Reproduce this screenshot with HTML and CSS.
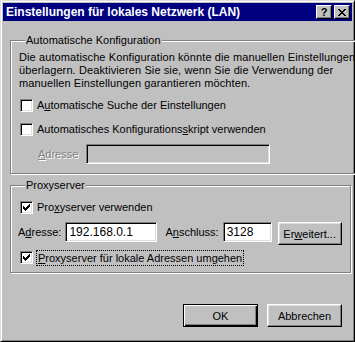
FILE: index.html
```html
<!DOCTYPE html>
<html lang="de">
<head>
    <meta charset="UTF-8">
    <title>Einstellungen für lokales Netzwerk (LAN)</title>
    <link rel="stylesheet" href="styles.css">
</head>
<body>
    <div class="window">
        <div class="titlebar">
            <span class="title">Einstellungen für lokales Netzwerk (LAN)</span>
            <div class="caption-buttons">
                <span class="caption-btn help">?</span>
                <span class="caption-btn close">
                    <svg width="8" height="7" viewBox="0 0 8 7" shape-rendering="crispEdges">
                        <path d="M0 0h2v1H0z M6 0h2v1H6z M1 1h2v1H1z M5 1h2v1H5z M2 2h4v1H2z M3 3h2v1H3z M2 4h4v1H2z M1 5h2v1H1z M5 5h2v1H5z M0 6h2v1H0z M6 6h2v1H6z" fill="#000"/>
                    </svg>
                </span>
            </div>
        </div>

        <div class="dialog">
            <fieldset class="group group-auto">
                <legend>Automatische Konfiguration</legend>
                <p class="info">Die automatische Konfiguration könnte die manuellen Einstellungen<br>überlagern. Deaktivieren Sie sie, wenn Sie die Verwendung der<br>manuellen Einstellungen garantieren möchten.</p>

                <div class="check check-first">
                    <span class="box"></span>
                    <span class="check-text">A<u>u</u>tomatische Suche der Einstellungen</span>
                </div>
                <div class="check check-second">
                    <span class="box"></span>
                    <span class="check-text">Automatisches Konfigurations<u>s</u>kript verwenden</span>
                </div>
                <div class="script-row">
                    <span class="disabled-label"><u>A</u>dresse</span>
                    <span class="field field-disabled"></span>
                </div>
            </fieldset>

            <fieldset class="group group-proxy">
                <legend>Proxyserver</legend>
                <div class="check check-proxy">
                    <span class="box checked">
                        <svg width="7" height="7" viewBox="0 0 7 7" shape-rendering="crispEdges">
                            <path d="M0 2h1v1h1v1h1V3h1V2h1V1h1V0h1v3h-1v1h-1v1h-1v1h-1v1H2V6H1V5H0z" fill="#000"/>
                        </svg>
                    </span>
                    <span class="check-text">Pro<u>x</u>yserver verwenden</span>
                </div>
                <div class="proxy-row">
                    <span class="row-label">A<u>d</u>resse:</span>
                    <span class="field field-address">192.168.0.1</span>
                    <span class="row-label label-port">A<u>n</u>schluss:</span>
                    <span class="field field-port">3128</span>
                    <span class="btn btn-advanced">Er<u>w</u>eitert...</span>
                </div>
                <div class="check check-bypass">
                    <span class="box checked">
                        <svg width="7" height="7" viewBox="0 0 7 7" shape-rendering="crispEdges">
                            <path d="M0 2h1v1h1v1h1V3h1V2h1V1h1V0h1v3h-1v1h-1v1h-1v1h-1v1H2V6H1V5H0z" fill="#000"/>
                        </svg>
                    </span>
                    <span class="check-text focused"><u>P</u>roxyserver für lokale Adressen umgehen</span>
                </div>
            </fieldset>

            <div class="actions">
                <span class="btn btn-default">OK</span>
                <span class="btn">Abbrechen</span>
            </div>
        </div>
    </div>
</body>
</html>
```

FILE: styles.css
```css
* {
    box-sizing: border-box;
}

body {
    margin: 0;
    background: #c0c0c0;
    font-family: "Liberation Sans", Arial, sans-serif;
    font-size: 11px;
    color: #000;
}

u {
    text-decoration: underline;
    text-underline-offset: 1px;
}

.window {
    width: 355px;
    height: 342px;
    padding: 2px;
    background: #c0c0c0;
    border: 1px solid;
    border-color: #dfdfdf #000 #000 #dfdfdf;
    box-shadow: inset 1px 1px 0 #fff, inset -1px -1px 0 #808080;
}

/* Titelleiste */
.titlebar {
    height: 18px;
    background: #000080;
    display: flex;
    align-items: center;
    justify-content: space-between;
    padding: 0 2px 0 3px;
}

.title {
    color: #fff;
    font-weight: bold;
    font-size: 12px;
    white-space: nowrap;
}

.caption-buttons {
    display: flex;
    gap: 2px;
}

.caption-btn {
    width: 16px;
    height: 14px;
    background: #c0c0c0;
    border: 1px solid;
    border-color: #fff #000 #000 #fff;
    box-shadow: inset -1px -1px 0 #808080;
    display: flex;
    align-items: center;
    justify-content: center;
    font-weight: bold;
    font-size: 11px;
    line-height: 12px;
}

/* Dialoginhalt */
.dialog {
    padding: 13px 6px 0 7px;
}

.group {
    margin: 0;
    padding: 0 8px;
    border: 1px solid #808080;
    box-shadow: inset 1px 1px 0 #fff, 1px 1px 0 #fff;
}

.group legend {
    margin-left: 6px;
    padding: 0 1px;
    line-height: 13px;
    background: #c0c0c0;
}

.group-auto {
    padding-top: 4px;
    padding-bottom: 9px;
}

.group-proxy {
    margin-top: 5px;
    padding-top: 0;
    padding-bottom: 8px;
}

.info {
    margin: 0;
    line-height: 13px;
    white-space: nowrap;
    letter-spacing: 0.1px;
}

.check {
    display: flex;
    align-items: center;
    height: 13px;
    margin-left: 1px;
}

.check-first {
    margin-top: 9px;
}

.check-second {
    margin-top: 11px;
}

.check-proxy {
    margin-top: 9px;
}

.check-bypass {
    margin-top: 6px;
}

.box {
    width: 13px;
    height: 13px;
    flex: none;
    background: #fff;
    border: 1px solid;
    border-color: #808080 #fff #fff #808080;
    box-shadow: inset 1px 1px 0 #000, inset -1px -1px 0 #dfdfdf;
    display: flex;
    align-items: center;
    justify-content: center;
}

.check-text {
    margin-left: 4px;
    line-height: 13px;
    white-space: nowrap;
}

.focused {
    margin-left: 3px;
    padding: 0 1px;
    height: 16px;
    line-height: 14px;
    border: 1px dotted #000;
}

.script-row {
    display: flex;
    align-items: center;
    margin-top: 8px;
    padding-left: 19px;
}

.disabled-label {
    color: #808080;
    text-shadow: 1px 1px 0 #fff;
    width: 48px;
}

.field {
    height: 20px;
    background: #fff;
    border: 1px solid;
    border-color: #808080 #fff #fff #808080;
    box-shadow: inset 1px 1px 0 #000, inset -1px -1px 0 #dfdfdf;
    padding: 0 3px;
    line-height: 18px;
    font-size: 12px;
    white-space: nowrap;
}

.field-disabled {
    width: 184px;
    background: #c0c0c0;
}

.proxy-row {
    display: flex;
    align-items: flex-start;
    margin-top: 8px;
    margin-left: -1px;
}

.row-label {
    line-height: 20px;
    margin-right: 4px;
}

.field-address {
    width: 92px;
}

.label-port {
    margin-left: 8px;
}

.field-port {
    width: 49px;
}

.btn {
    display: flex;
    align-items: center;
    justify-content: center;
    width: 75px;
    height: 23px;
    background: #c0c0c0;
    border: 1px solid;
    border-color: #fff #000 #000 #fff;
    box-shadow: inset -1px -1px 0 #808080, inset 1px 1px 0 #dfdfdf;
    font-size: 11px;
}

.btn-advanced {
    width: 64px;
    margin-left: 6px;
}

.btn-default {
    border-color: #000;
    box-shadow: inset 1px 1px 0 #fff, inset -1px -1px 0 #000, inset -2px -2px 0 #808080;
}

.actions {
    display: flex;
    justify-content: flex-end;
    gap: 9px;
    margin-top: 31px;
    padding-right: 4px;
}
```
